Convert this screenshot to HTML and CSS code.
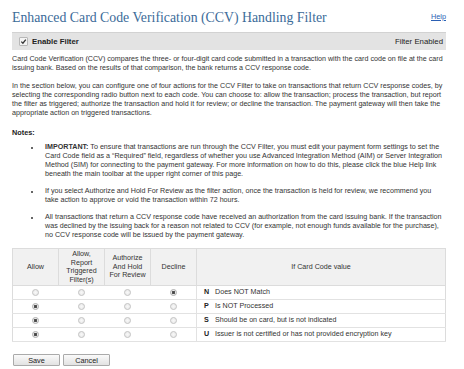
FILE: index.html
```html
<!DOCTYPE html>
<html lang="en">
<head>
  <meta charset="UTF-8" />
  <title>Card Code Verification Filter</title>
  <link rel="stylesheet" href="styles.css">
</head>
<body>

<div class="page">
  <div class="title-row">
    <h1>Enhanced Card Code Verification (CCV) Handling Filter</h1>
    <a href="#" class="help">Help</a>
  </div>

  <div class="enable-bar">
    <label class="enable">
      <span class="checkbox">
        <svg width="7" height="7" viewBox="0 0 7 7"><path d="M1.3 3.6 L2.9 5.2 L5.8 1.6" fill="none" stroke="#333" stroke-width="1.3"/></svg>
      </span>
      Enable Filter
    </label>
    <span class="status">Filter Enabled</span>
  </div>

  <p>Card Code Verification (CCV) compares the three- or four-digit card code submitted in a transaction with the card code on file at the card issuing bank. Based on the results of that comparison, the bank returns a CCV response code.</p>

  <p>In the section below, you can configure one of four actions for the CCV Filter to take on transactions that return CCV response codes, by selecting the corresponding radio button next to each code. You can choose to: allow the transaction; process the transaction, but report the filter as triggered; authorize the transaction and hold it for review; or decline the transaction. The payment gateway will then take the appropriate action on triggered transactions.</p>

  <h3>Notes:</h3>

  <ul class="notes">
    <li><b>IMPORTANT:</b> To ensure that transactions are run through the CCV Filter, you must edit your payment form settings to set the Card Code field as a “Required” field, regardless of whether you use Advanced Integration Method (AIM) or Server Integration Method (SIM) for connecting to the payment gateway. For more information on how to do this, please click the blue Help link beneath the main toolbar at the upper right corner of this page.</li>
    <li>If you select Authorize and Hold For Review as the filter action, once the transaction is held for review, we recommend you take action to approve or void the transaction within 72 hours.</li>
    <li>All transactions that return a CCV response code have received an authorization from the card issuing bank. If the transaction was declined by the issuing back for a reason not related to CCV (for example, not enough funds available for the purchase), no CCV response code will be issued by the payment gateway.</li>
  </ul>

  <table class="codes">
    <thead>
      <tr>
        <th class="act">Allow</th>
        <th class="act">Allow,<br>Report<br>Triggered<br>Filter(s)</th>
        <th class="act">Authorize<br>And Hold<br>For Review</th>
        <th class="act">Decline</th>
        <th>If Card Code value</th>
      </tr>
    </thead>
    <tbody>
      <tr>
        <td><input type="radio" name="n"></td>
        <td><input type="radio" name="n"></td>
        <td><input type="radio" name="n"></td>
        <td><input type="radio" name="n" checked></td>
        <td class="code"><b>N</b>Does NOT Match</td>
      </tr>
      <tr>
        <td><input type="radio" name="p" checked></td>
        <td><input type="radio" name="p"></td>
        <td><input type="radio" name="p"></td>
        <td><input type="radio" name="p"></td>
        <td class="code"><b>P</b>Is NOT Processed</td>
      </tr>
      <tr>
        <td><input type="radio" name="s" checked></td>
        <td><input type="radio" name="s"></td>
        <td><input type="radio" name="s"></td>
        <td><input type="radio" name="s"></td>
        <td class="code"><b>S</b>Should be on card, but is not indicated</td>
      </tr>
      <tr>
        <td><input type="radio" name="u" checked></td>
        <td><input type="radio" name="u"></td>
        <td><input type="radio" name="u"></td>
        <td><input type="radio" name="u"></td>
        <td class="code"><b>U</b>Issuer is not certified or has not provided encryption key</td>
      </tr>
    </tbody>
  </table>

  <div class="actions">
    <button type="button">Save</button>
    <button type="button">Cancel</button>
  </div>
</div>

</body>
</html>
```

FILE: styles.css
```css
body {
  margin: 0;
  font-family: "Liberation Sans", Arial, sans-serif;
  font-size: 7.15px;
  line-height: 9px;
  color: #333;
  background: #fff;
}

.page {
  padding: 8px 18px 0 12px;
}

.title-row {
  display: flex;
  justify-content: space-between;
  align-items: flex-end;
  height: 18px;
}

h1 {
  margin: 0;
  font-family: "Liberation Serif", Georgia, serif;
  font-weight: normal;
  font-size: 13.8px;
  line-height: 16px;
  color: #3b6b99;
}

.help {
  color: #2b5fb3;
  font-size: 7.3px;
  margin-bottom: 5px;
}

.enable-bar {
  margin-top: 6px;
  height: 17px;
  display: flex;
  align-items: center;
  justify-content: space-between;
  padding: 0 3px 0 7px;
  background: #e3e3e3;
  border-top: 1px solid #d2d2d2;
  font-size: 7.8px;
}

.enable {
  display: flex;
  align-items: center;
  gap: 4px;
  font-weight: bold;
  color: #222;
}

.checkbox {
  width: 7px;
  height: 7px;
  display: flex;
  background: #f4f4f4;
  border: 1px solid #b8b8b8;
  border-radius: 1px;
}

.status {
  color: #222;
}

p {
  margin: 5px 0 9px;
}

h3 {
  margin: 10px 0 0;
  font-size: 7.3px;
  color: #222;
}

.notes {
  margin: 6px 0 0;
  padding-left: 33px;
  list-style: none;
}

.notes li {
  position: relative;
  margin-bottom: 8px;
}

.notes li::before {
  content: "";
  position: absolute;
  left: -14px;
  top: 4px;
  width: 2px;
  height: 2px;
  border-radius: 50%;
  background: #333;
}

.codes {
  width: 434px;
  border-collapse: collapse;
  border: 1px solid #dcdcdc;
  table-layout: fixed;
}

.codes th {
  height: 36px;
  padding: 0;
  font-weight: normal;
  line-height: 8.5px;
  background: #f1f1f1;
  border: 1px solid #dcdcdc;
  color: #333;
}

.codes th.act {
  width: 45px;
}

.codes td {
  height: 13px;
  padding: 0;
  text-align: center;
  border-top: 1px solid #e2e2e2;
  border-bottom: 1px solid #e2e2e2;
}

.codes td.code {
  text-align: left;
  padding-left: 7px;
  border-left: 1px solid #e2e2e2;
}

.codes td.code b {
  display: inline-block;
  width: 11px;
  color: #222;
}

input[type=radio] {
  appearance: none;
  margin: 0;
  width: 7px;
  height: 7px;
  border: 1px solid #c4c4c4;
  border-radius: 50%;
  background: radial-gradient(circle, #f8f8f8, #e6e6e6);
  vertical-align: middle;
}

input[type=radio]:checked {
  background: radial-gradient(circle, #444 0, #555 1.4px, #e8e8e8 1.9px);
  border-color: #b0b0b0;
}

.actions {
  margin-top: 12px;
  display: flex;
  gap: 3px;
  padding-left: 1px;
}

button {
  width: 47px;
  height: 12px;
  padding: 0;
  font-family: "Liberation Sans", Arial, sans-serif;
  font-size: 7.3px;
  color: #222;
  background: linear-gradient(#fafafa, #e2e2e2);
  border: 1px solid #aaa;
  border-radius: 1px;
}
```
